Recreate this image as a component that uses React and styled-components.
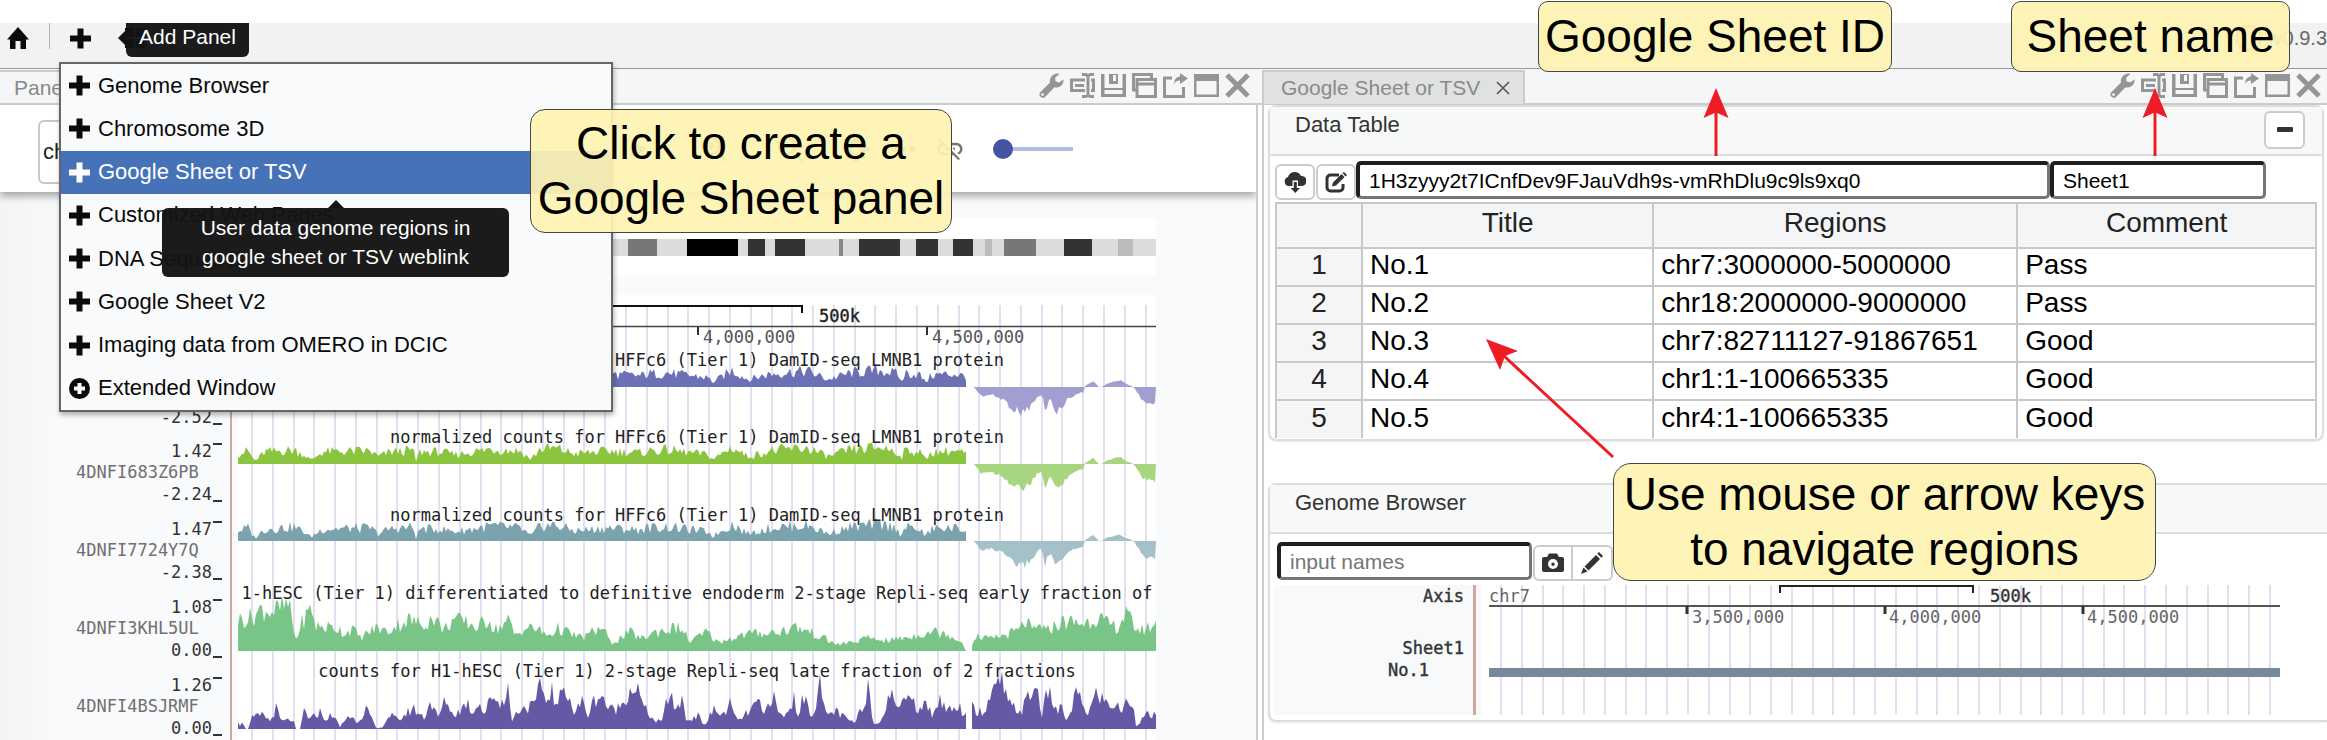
import React from "react";
import styled, { createGlobalStyle, css } from "styled-components";

const sans = '"Liberation Sans", Arial, Helvetica, sans-serif';
const mono = '"DejaVu Sans Mono", "Liberation Mono", monospace';

const GlobalStyle = createGlobalStyle`
  * { box-sizing: border-box; }
  body { margin: 0; background: #fff; font-family: ${sans}; color: #0a0a0a; overflow-x: hidden; }
  button, input { font-family: inherit; margin: 0; }
`;

/* ---------- page frame ---------- */

const Page = styled.div`
  position: relative;
  overflow: hidden;
  padding-top: 23px;
`;

const Toolbar = styled.header`
  position: relative;
  z-index: 3;
  display: flex;
  align-items: flex-start;
  height: 46px;
  padding-left: 7px;
  background: #f2f2f2;
  border-bottom: 1px solid #999;
`;

const ToolButton = styled.button`
  display: flex;
  align-items: center;
  justify-content: center;
  width: 22px;
  height: 30px;
  padding: 0;
  border: 0;
  background: none;
  color: #0a0a0a;
`;

const ToolDivider = styled.span`
  width: 1px;
  height: 26px;
  margin: 0 19px 0 20px;
  background: #b5b5b5;
`;

const LayoutButton = styled(ToolButton)`
  margin-left: 33px;
`;

const Version = styled.span`
  display: flex;
  align-items: center;
  gap: 10px;
  margin-left: auto;
  height: 30px;
  font-size: 20px;
  color: #666;
`;

const tipBox = css`
  position: absolute;
  background: rgba(20, 20, 20, 0.97);
  color: #fff;
  font-size: 21px;
  text-align: center;
  border-radius: 6px;
  &::before {
    content: "";
    position: absolute;
    border: 8px solid transparent;
  }
`;

const SideTip = styled.div`
  ${tipBox}
  left: 126px;
  top: 0;
  width: 123px;
  height: 34px;
  line-height: 27px;
  border-radius: 0 0 6px 6px;
  &::before {
    left: -16px;
    top: 7px;
    border-right-color: #141414;
  }
`;

const MenuTip = styled.div`
  ${tipBox}
  left: 101px;
  top: 144px;
  width: 347px;
  padding: 5px 30px 6px;
  line-height: 29px;
  &::before {
    left: 166px;
    top: -16px;
    border-bottom-color: #141414;
  }
`;

const Menu = styled.nav`
  position: absolute;
  left: 59px;
  top: 39px;
  display: flex;
  flex-direction: column;
  width: 554px;
  height: 350px;
  border: 2px solid #666;
  background: #f9fafc;
  box-shadow: 1px 3px 5px rgba(0, 0, 0, 0.3);
`;

const MenuItem = styled.button`
  flex: 1;
  display: flex;
  align-items: center;
  gap: 8px;
  padding: 0 8px;
  border: 0;
  font-size: 22px;
  text-align: left;
  background: ${(p) => (p.$active ? "#4673b8" : "none")};
  color: ${(p) => (p.$active ? "#fff" : "#0a0a0a")};
`;

const Workspace = styled.main`
  display: grid;
  grid-template-columns: minmax(0, 1262fr) minmax(0, 1065fr);
`;

const Panel = styled.section`
  display: flex;
  flex-direction: column;
  min-width: 0;
  overflow: hidden;
`;

const TabBar = styled.div`
  display: flex;
  align-items: center;
  justify-content: space-between;
  height: 36px;
  padding: 2px ${(p) => p.$end}px 0 0;
  background: #f5f6f8;
  border-bottom: 2px solid #ccc;
`;

const Tab = styled.div`
  display: flex;
  align-items: center;
  gap: 16px;
  height: 34px;
  padding: 0 14px;
  font-size: 21px;
  color: #8a8a8a;
  border-top: 2px solid #ccc;
  ${(p) =>
    p.$filled &&
    css`
      padding: 0 13px 0 17px;
      background: #e0e1e1;
      border-left: 2px solid #ccc;
      border-right: 2px solid #ccc;
    `}
`;

const TabClose = styled.button`
  display: flex;
  padding: 0;
  border: 0;
  background: none;
  color: #555;
`;

const PanelTools = styled.div`
  display: flex;
  gap: 6px;
  padding-bottom: 4px;
`;

const PanelTool = styled.button`
  display: flex;
  width: 25px;
  height: 25px;
  padding: 0;
  border: 0;
  background: none;
  color: #959595;
`;

/* ---------- browser panel ---------- */

const BrowserBody = styled.div`
  flex: 1;
  margin-right: 4px;
  border-right: 2px solid #ccc;
  background: linear-gradient(90deg, #f2f4f6, #f9fafc 60px);
  overflow: hidden;
`;

const ControlBar = styled.div`
  position: relative;
  z-index: 1;
  display: flex;
  align-items: center;
  height: 87px;
  padding-left: 38px;
  background: #fff;
  box-shadow: 0 4px 8px rgba(0, 0, 0, 0.35);
`;

const RegionInput = styled.input`
  width: 560px;
  height: 64px;
  margin-top: 6px;
  padding: 0 3px;
  border: 2px solid #c8c8c8;
  border-radius: 6px;
  font-size: 22px;
  color: #222;
`;

const ControlGroup = styled.div`
  display: flex;
  gap: ${(p) => p.$gap}px;
  margin-left: ${(p) => p.$start}px;
`;

const ControlButton = styled.button`
  display: flex;
  align-items: center;
  justify-content: center;
  width: 30px;
  height: 30px;
  padding: 0;
  border: 0;
  background: none;
  color: #757575;
`;

const ControlDivider = styled.span`
  width: 1px;
  height: 60px;
  margin-left: 20px;
  background: #ccc;
`;

const Slider = styled.input`
  appearance: none;
  width: 80px;
  height: 20px;
  margin-left: 28px;
  background: linear-gradient(#b4bae0, #b4bae0) center / 100% 4px no-repeat;
  &::-webkit-slider-thumb {
    appearance: none;
    width: 20px;
    height: 20px;
    border-radius: 50%;
    background: #4555a5;
  }
`;

const Chart = styled.svg`
  display: block;
  font-family: ${mono};
  font-size: 17px;
`;

/* ---------- sheet panel ---------- */

const SheetPanel = styled(Panel)`
  background: #fff;
`;

const SheetBody = styled.div`
  flex: 1;
  display: flex;
  flex-direction: column;
  gap: 42px;
  padding: 0 0 0 4px;
  border-left: 2px solid #ccc;
`;

const Card = styled.section`
  border: 2px solid #ddd;
  border-radius: 8px;
  box-shadow: 0 1px 2px rgba(0, 0, 0, 0.08);
  ${(p) => (p.$bleed ? "border-right: 0; border-radius: 8px 0 0 8px;" : "margin-right: 3px;")}
`;

const CardHeader = styled.header`
  display: flex;
  justify-content: space-between;
  height: 49px;
  padding: 4px 17px 0 25px;
  background: #f7f9f9;
  border-bottom: 2px solid #ddd;
`;

const CardTitle = styled.h2`
  margin: 0;
  font-size: 22px;
  font-weight: 400;
  line-height: 27px;
  color: #333;
`;

const CollapseButton = styled.button`
  display: flex;
  align-items: center;
  justify-content: center;
  width: 41px;
  height: 38px;
  padding: 0;
  border: 2px solid #ccc;
  border-radius: 6px;
  background: #fff;
  color: #333;
`;

const FieldRow = styled.div`
  display: flex;
  align-items: flex-start;
  padding: ${(p) => p.$pad};
`;

const SquareButton = styled.button`
  display: flex;
  align-items: center;
  justify-content: center;
  width: 40px;
  height: 36px;
  margin: 3px 0 0 ${(p) => (p.$joined ? 0 : 1)}px;
  padding: 0;
  border: 2px solid #ccc;
  border-left-width: ${(p) => (p.$joined ? 0 : 2)}px;
  border-radius: ${(p) => p.$radius || "6px"};
  background: #fff;
  color: #333;
`;

const Field = styled.input`
  ${(p) => (p.$width ? `width: ${p.$width}px;` : "flex: 1; min-width: 0;")}
  height: 38px;
  padding: 0 9px;
  border: 4px solid;
  border-color: #1f1f1f #767676 #767676 #1f1f1f;
  border-width: 4px 3px 3px 4px;
  border-radius: 5px;
  background: #fff;
  font-size: 21px;
  color: #000;
  &::placeholder { color: #757575; opacity: 1; }
`;

const TableWrap = styled.div`
  height: 239px;
  padding: 2px 5px 0 5px;
  overflow: hidden;
`;

const Table = styled.table`
  width: 100%;
  table-layout: fixed;
  border-collapse: collapse;
  font-size: 28px;
  line-height: 32px;
  th, td {
    height: 38px;
    padding: 0 7px 4px;
    border: 2px solid #c8c8c8;
    text-align: left;
    font-weight: 400;
    color: #000;
  }
  th {
    padding-bottom: 4px;
    background: #f4f5f7;
    text-align: center;
    color: #222;
  }
  thead th { height: 45px; padding-bottom: 6px; }
  tbody tr:last-child > * { border-bottom: 0; }
`;

const IndexCol = styled.col`
  width: 86px;
`;

const Col = styled.col`
  width: ${(p) => (p.$share ? `${p.$share}%` : "auto")};
`;

const TrackWrap = styled.div`
  padding: 4px 0 5px 4px;
  overflow: hidden;
`;

/* ---------- notes on top ---------- */

const Callout = styled.div`
  position: absolute;
  z-index: 5;
  left: ${(p) => p.$x}px;
  top: ${(p) => p.$y}px;
  width: ${(p) => p.$w}px;
  padding: ${(p) => p.$pad}px 0;
  border: 1px solid #444;
  border-radius: ${(p) => p.$r}px;
  background: rgba(255, 243, 178, 0.92);
  font-size: 46px;
  line-height: 55px;
  text-align: center;
  white-space: nowrap;
  color: #000;
`;

const Arrow = styled.svg`
  position: absolute;
  z-index: 6;
  left: ${(p) => p.$x}px;
  top: ${(p) => p.$y}px;
  color: #ee1c25;
`;

/* ---------- icons ---------- */

const Icon = ({ size = 25, h, box, children }) => (
  <svg width={size} height={h || size} viewBox={box || `0 0 ${size} ${h || size}`} fill="currentColor" aria-hidden="true">
    {children}
  </svg>
);

const Plus = () => (
  <Icon size={21}>
    <path d="M7.500 .5h6v7H21v6h-7.500v7h-6v-7H0v-6h7.500z" />
  </Icon>
);
const PlusCircle = () => (
  <Icon size={21}>
    <path fillRule="evenodd" d="M10.500 0a10.500 10.500 0 1 0 0 21 10.500 10.500 0 0 0 0-21zM8.500 5h4v3.500H16v4h-3.500V16h-4v-3.500H5v-4h3.500z" />
  </Icon>
);
const Home = () => (
  <Icon size={22}>
    <path d="M11 0l11 12.500h-3V22h-5.500v-8h-5v8H3v-9.500H0z" />
  </Icon>
);
const Tiles = () => (
  <Icon size={20}>
    <path d="M0 0h9v9H0zM11 0h9v9h-9zM0 11h9v9H0zM11 11h9v9h-9z" />
  </Icon>
);
const Minus = () => (
  <Icon size={16}>
    <rect y="5" width="16" height="5" rx="1" />
  </Icon>
);
const SmallX = () => (
  <Icon size={14}>
    <path d="M1 1l12 12M13 1L1 13" stroke="currentColor" strokeWidth="1.6" />
  </Icon>
);
const CloudDown = () => (
  <Icon size={22} h={21}>
    <path fillRule="evenodd" d="M5 14a4.600 4.600 0 0 1-1-9 7 7 0 0 1 13-1 5 5 0 0 1 1 10h-4V8.500H8.500V14zM9.800 10h3v6h3.200l-4.700 5-4.700-5h3.200z" />
  </Icon>
);
const Compose = () => (
  <Icon size={22} h={21}>
    <path d="M14 3H5.500A3.500 3.500 0 0 0 2 6.500v9A3.500 3.500 0 0 0 5.500 19h9a3.500 3.500 0 0 0 3.500-3.500V12" fill="none" stroke="currentColor" strokeWidth="3" />
    <path d="M8 10.500L16.500 2l3 3L11 13.500l-4 1zM17.500 1L19 0l3 3-1.500 1.500z" />
  </Icon>
);
const Camera = () => (
  <Icon size={22} h={20}>
    <path fillRule="evenodd" d="M2 4h3l2-3.500h8L17 4h3a2 2 0 0 1 2 2v11a2 2 0 0 1-2 2H2a2 2 0 0 1-2-2V6a2 2 0 0 1 2-2zM11 6a5 5 0 1 0 0 10 5 5 0 0 0 0-10zm0 3.500a1.700 1.700 0 1 1 0 3.400 1.700 1.700 0 0 1 0-3.400z" />
  </Icon>
);
const Pencil = () => (
  <Icon size={22}>
    <path d="M15 3l4 4L7.500 18.500l-4-4zM16.300 1.800L18 0l4 4-1.700 1.800zM2.500 15.500l4 4L0 22z" />
  </Icon>
);

const panelIcons = [
  ["Settings", <path key="p" d="M24.500 6.500l-4.500 3-3.500-1.200-.4-3.500L20.500.8a7.500 7.500 0 0 0-9.500 8.700L1 19.500a3.500 3.500 0 0 0 4.800 4.800l9.700-10a7.300 7.300 0 0 0 9-7.800zM3.500 23a1.400 1.400 0 1 1 0-2.800 1.400 1.400 0 0 1 0 2.800z" />],
  ["Rename", <g key="p" fill="none" stroke="currentColor" strokeWidth="3"><path d="M15 7H1.500v10.500H15M21 7h2.500v10.500H21M5 12.500h9M12 1.500h4l2 1.500 2-1.500h4M12 23.500h4l2-1.500 2 1.500h4M18 3v19" /></g>],
  ["Save", <path key="p" fillRule="evenodd" d="M0 1h3.500v14h18V1H25v23H0zM8 1h9v10H8zm4 1v6h3V2zM3.500 17v4h18v-4z" />],
  ["Duplicate", <path key="p" d="M5 17H1.500V1.500h18V5M5 6.500h18.500v17H5zM5 11h18.500" fill="none" stroke="currentColor" strokeWidth="3" />],
  ["Pop out", <g key="p"><path d="M9 5H1.500v18.500h19V14" fill="none" stroke="currentColor" strokeWidth="3" /><path d="M17 0l8 5.500-8 5.500V7.500c-3 0-5 1-6 4 0-4.500 2-7.500 6-8z" /></g>],
  ["Maximize", <path key="p" fillRule="evenodd" d="M0 1h25v23H0zM2.500 8v13.500h20V8z" />],
  ["Close", <path key="p" d="M2 2l21 21M23 2L2 23" fill="none" stroke="currentColor" strokeWidth="5" />],
];

const PanelIcons = () => (
  <PanelTools>
    {panelIcons.map(([name, shape]) => (
      <PanelTool key={name} aria-label={name}>
        <Icon>{shape}</Icon>
      </PanelTool>
    ))}
  </PanelTools>
);

/* ---------- signal tracks ---------- */

const noise = (i, seed) => {
  const v = Math.sin(i * 12.9898 + seed * 78.233) * 43758.5453;
  return v - Math.floor(v);
};

const level = (points, x) => {
  for (let i = 1; i < points.length; i++) {
    const [x1, y1] = points[i];
    if (x <= x1) {
      const [x0, y0] = points[i - 1];
      return y0 + ((y1 - y0) * (x - x0)) / (x1 - x0 || 1);
    }
  }
  return points[points.length - 1][1];
};

const areaPath = (points, base, rough, seed) => {
  const start = points[0][0];
  const end = points[points.length - 1][0];
  let d = `M${start} ${base}`;
  let i = 0;
  for (let x = start; x <= end; x += 2, i++) {
    const h = level(points, x);
    const wobble = 1 - rough + rough * 1.7 * noise(i, seed);
    d += `L${x} ${(base - h * wobble).toFixed(1)}`;
  }
  return `${d}L${end} ${base}Z`;
};

const damUp = [
  [238, 11], [248, 14], [255, 3], [265, 13], [294, 15], [304, 10], [311, 4], [322, 13], [370, 14], [378, 8], [390, 13],
  [413, 15], [416, 3], [420, 13], [440, 13], [455, 10], [490, 16], [520, 14], [531, 5], [540, 16], [555, 17], [575, 11],
  [608, 14], [640, 12], [648, 14], [668, 15], [708, 10], [713, 5], [732, 18], [748, 8], [770, 14], [790, 16], [808, 17],
  [828, 8], [850, 15], [880, 18], [898, 14], [901, 4], [905, 15], [920, 13], [925, 5], [932, 13], [955, 14], [966, 11],
];
const damDown = [
  [973, 1], [981, -9], [991, -8], [1004, -13], [1012, -22], [1021, -26], [1030, -21], [1037, -11], [1042, -8],
  [1045, -23], [1050, -12], [1057, -27], [1063, -19], [1070, -10], [1084, -5], [1085, 0],
];
const damTail = [
  [1085, 1], [1093, 6], [1098, 1], [1100, -1], [1106, 3], [1112, 5], [1120, 7], [1126, 3], [1132, 1], [1135, -2],
  [1140, -10], [1144, -16], [1156, -18],
];
const earlyLeft = [
  [238, 33], [252, 36], [262, 44], [274, 42], [288, 48], [292, 35], [295, 10], [302, 30], [312, 46], [315, 26],
  [329, 25], [339, 24], [344, 18], [352, 24], [360, 14], [377, 25], [387, 20], [396, 27], [409, 33], [421, 28],
  [434, 35], [444, 22], [452, 33], [467, 30], [478, 25], [490, 35], [494, 22], [509, 32], [515, 16], [524, 24],
  [536, 24], [547, 16], [559, 24], [570, 18], [582, 14], [602, 25], [611, 8], [621, 14], [629, 20], [642, 13],
  [655, 20], [680, 25], [690, 10], [707, 20], [718, 9], [726, 12], [747, 18], [777, 20], [796, 25], [810, 20],
  [823, 14], [836, 7], [852, 9], [869, 14], [886, 11], [911, 15], [930, 21], [949, 18], [962, 9], [966, 0],
];
const earlyRight = [
  [972, 8], [975, 17], [991, 12], [1020, 22], [1025, 32], [1033, 20], [1042, 28], [1046, 19], [1050, 24],
  [1063, 31], [1084, 29], [1098, 37], [1105, 29], [1118, 25], [1125, 39], [1139, 21], [1156, 28],
];
const lateLeft = [
  [238, 10], [240, 4], [242, 9], [245, 0], [249, 0], [251, 11], [264, 15], [270, 8], [276, 22], [281, 8], [293, 10],
  [296, 0], [300, 0], [304, 20], [310, 10], [320, 18], [328, 8], [331, 18], [340, 2], [348, 14], [358, 8], [366, 22],
  [375, 3], [377, 0], [382, 2], [390, 15], [398, 9], [413, 22], [424, 12], [430, 29], [438, 12], [446, 32], [452, 16],
  [459, 18], [467, 29], [473, 16], [478, 31], [484, 16], [494, 38], [500, 24], [508, 46], [511, 8], [520, 22],
  [534, 24], [542, 48], [546, 26], [551, 46], [556, 22], [566, 48], [574, 16], [582, 29], [588, 15], [595, 32],
  [602, 36], [609, 20], [620, 23], [627, 38], [636, 46], [644, 22], [655, 8], [663, 8], [667, 37], [678, 20],
  [683, 38], [686, 8], [697, 15], [705, 4], [714, 21], [722, 14], [730, 26], [737, 8], [747, 16], [758, 28],
  [764, 14], [772, 38], [779, 14], [789, 16], [794, 34], [798, 16], [804, 34], [812, 14], [820, 48], [825, 14],
  [836, 19], [844, 12], [855, 6], [861, 20], [869, 49], [873, 4], [882, 12], [890, 35], [903, 24], [911, 49],
  [916, 20], [928, 27], [932, 10], [939, 33], [947, 20], [958, 25], [966, 15],
];
const lateRight = [
  [972, 22], [983, 18], [993, 38], [1002, 50], [1008, 26], [1021, 18], [1029, 35], [1038, 43], [1042, 14], [1048, 41],
  [1057, 18], [1063, 22], [1067, 6], [1076, 38], [1088, 16], [1097, 39], [1105, 28], [1116, 24], [1122, 20],
  [1126, 27], [1132, 32], [1136, 4], [1147, 15], [1156, 14],
];

const damTitle = "normalized counts for HFFc6 (Tier 1) DamID-seq LMNB1 protein";

const tracks = [
  { top: 366, base: 387, title: damTitle, low: "-2.52", up: "#6c70b5", down: "#a09fd0" },
  { top: 443, base: 464, title: damTitle, high: "1.42", name: "4DNFI683Z6PB", low: "-2.24", up: "#8bc43f", down: "#a8d580" },
  { top: 521, base: 541, title: damTitle, high: "1.47", name: "4DNFI7724Y7Q", low: "-2.38", up: "#7aa3ad", down: "#a4c0c8" },
  {
    top: 599, base: 651, high: "1.08", name: "4DNFI3KHL5UL", low: "0.00", up: "#78c587",
    title: "1-hESC (Tier 1) differentiated to definitive endoderm 2-stage Repli-seq early fraction of",
    parts: [earlyLeft, earlyRight], rough: 0.35,
  },
  {
    top: 677, base: 729, high: "1.26", name: "4DNFI4BSJRMF", low: "0.00", up: "#6559a5",
    title: "counts for H1-hESC (Tier 1) 2-stage Repli-seq late fraction of 2 fractions",
    parts: [lateLeft, lateRight], rough: 0.35,
  },
];

const bands = [
  [300, 40, "#777"], [380, 30, "#333"], [450, 60, "#777"], [628, 29, "#777"], [687, 51, "#000"], [748, 17, "#333"],
  [775, 30, "#333"], [839, 4, "#888"], [859, 41, "#333"], [916, 22, "#333"], [953, 20, "#333"], [985, 7, "#bbb"],
  [1004, 32, "#777"], [1064, 28, "#333"], [1118, 15, "#bbb"],
];

const Grid = ({ x, count, y1, y2 }) => (
  <g stroke="#e1dff0" strokeWidth="2">
    {Array.from({ length: count }, (_, i) => {
      const gx = Math.round(x + i * 20.78);
      return <line key={i} x1={gx} x2={gx} y1={y1} y2={y2} />;
    })}
  </g>
);

const Track = ({ t, index }) => (
  <g>
    <g fill="#333" textAnchor="end">
      {t.high && <text x="212" y={t.top + 14}>{t.high}</text>}
      <text x="212" y={t.top + 57}>{t.low}</text>
    </g>
    {t.high && <rect x="213" y={t.top} width="9" height="2" fill="#333" />}
    <rect x="213" y={t.top + 57} width="9" height="2" fill="#333" />
    {t.name && <text x="76" y={t.top + 35} fill="#707070">{t.name}</text>}
    {t.parts ? (
      t.parts.map((p, i) => <path key={i} d={areaPath(p, t.base, t.rough, index + i)} fill={t.up} />)
    ) : (
      <>
        <path d={areaPath(damUp, t.base, 0.45, index)} fill={t.up} />
        <path d={areaPath(damDown, t.base, 0.2, index)} fill={t.down} />
        <path d={areaPath(damTail, t.base, 0.15, index)} fill={t.down} />
      </>
    )}
    <text x="697" y={t.top} textAnchor="middle" fill="#222">{t.title}</text>
  </g>
);

const LeftTracks = () => (
  <Chart width="1256" height="548" viewBox="0 192 1256 548">
    <rect x="238" y="218" width="918" height="57" fill="#fff" />
    <rect x="238" y="295" width="918" height="445" fill="#fff" />
    <rect x="238" y="239" width="918" height="17" fill="#dcdcde" />
    {bands.map(([x, w, fill]) => (
      <rect key={x} x={x} y="239" width={w} height="17" fill={fill} />
    ))}
    <Grid x={252} count={44} y1={305} y2={740} />
    <rect x="230" y="295" width="2" height="445" fill="#cfa9a0" />
    <path d="M610 306H802V313" fill="none" stroke="#111" strokeWidth="2" />
    <path d="M238 326.500H1156" stroke="#444" strokeWidth="1.500" />
    <path d="M698 327v8M927 327v8" stroke="#333" strokeWidth="2" />
    <g fill="#555">
      <text x="819" y="322" fill="#222" stroke="#222" strokeWidth=".4">500k</text>
      <text x="703" y="343">4,000,000</text>
      <text x="932" y="343">4,500,000</text>
    </g>
    {tracks.map((t, i) => (
      <Track key={i} t={t} index={i + 1} />
    ))}
  </Chart>
);

const RightTracks = () => (
  <Chart width="1053" height="130" viewBox="1274 584 1053 130">
    <rect x="1274" y="584" width="208" height="130" fill="#f8f9fb" />
    <Grid x={1501} count={38} y1={584} y2={714} />
    <rect x="1473" y="584" width="3" height="130" fill="#cfa9a0" />
    <path d="M1489 605H2280" stroke="#555" strokeWidth="2" />
    <path d="M1780 592V585H1973V592" fill="none" stroke="#222" strokeWidth="2" />
    <path d="M1687 605v8M1885 605v8M2083 605v8" stroke="#333" strokeWidth="3" />
    <rect x="1489" y="667" width="791" height="9" fill="#788a99" />
    <g fill="#333" stroke="#333" strokeWidth=".4">
      <text x="1464" y="601" textAnchor="end">Axis</text>
      <text x="1464" y="653" textAnchor="end">Sheet1</text>
      <text x="1388" y="675">No.1</text>
      <text x="1990" y="601">500k</text>
    </g>
    <g fill="#666">
      <text x="1489" y="601">chr7</text>
      <text x="1692" y="622">3,500,000</text>
      <text x="1889" y="622">4,000,000</text>
      <text x="2087" y="622">4,500,000</text>
    </g>
  </Chart>
);

/* ---------- data ---------- */

const menuItems = [
  "Genome Browser", "Chromosome 3D", "Google Sheet or TSV", "Customized Web Pages",
  "DNA Sequence", "Google Sheet V2", "Imaging data from OMERO in DCIC", "Extended Window",
];

const rows = [
  ["No.1", "chr7:3000000-5000000", "Pass"],
  ["No.2", "chr18:2000000-9000000", "Pass"],
  ["No.3", "chr7:82711127-91867651", "Good"],
  ["No.4", "chr1:1-100665335", "Good"],
  ["No.5", "chr4:1-100665335", "Good"],
];

const UpArrow = ({ x }) => (
  <Arrow $x={x} $y={88} width="26" height="68" viewBox="0 0 26 68">
    <path d="M13 0L25.500 30L14.500 25V68H11.500V25L.5 30Z" fill="currentColor" />
  </Arrow>
);

export default function App() {
  return (
    <Page>
      <GlobalStyle />
      <Toolbar>
        <ToolButton aria-label="Home"><Home /></ToolButton>
        <ToolDivider />
        <ToolButton aria-label="Add Panel"><Plus /></ToolButton>
        <LayoutButton aria-label="Layout"><Tiles /></LayoutButton>
        <Version>
          <Icon size={28}>
            <circle cx="14" cy="14" r="12" fill="none" stroke="#f26a3d" strokeWidth="3" />
          </Icon>
          v0.9.3
        </Version>
        <SideTip role="tooltip">Add Panel</SideTip>
        <Menu>
          {menuItems.map((label, i) => (
            <MenuItem key={label} $active={i === 2}>
              {i === 7 ? <PlusCircle /> : <Plus />}
              {label}
            </MenuItem>
          ))}
          <MenuTip role="tooltip">User data genome regions in google sheet or TSV weblink</MenuTip>
        </Menu>
      </Toolbar>

      <Workspace>
        <Panel>
          <TabBar $end={12}>
            <Tab>Panel</Tab>
            <PanelIcons />
          </TabBar>
          <BrowserBody>
            <ControlBar>
              <RegionInput aria-label="Region" defaultValue="chr7:3000000-5000000" />
              <ControlGroup $start={25} $gap={46}>
                <ControlButton aria-label="Go"><Icon size={18}><path d="M2 0l15 9-15 9z" /></Icon></ControlButton>
                <ControlButton aria-label="Zoom in"><Icon size={26}><path d="M17 17l8 8M6 10h8M10 6v8M18 10a8 8 0 1 1-16 0 8 8 0 0 1 16 0z" fill="none" stroke="currentColor" strokeWidth="3" /></Icon></ControlButton>
                <ControlButton aria-label="Zoom out"><Icon size={26}><path d="M17 17l8 8M6 10h8M18 10a8 8 0 1 1-16 0 8 8 0 0 1 16 0z" fill="none" stroke="currentColor" strokeWidth="3" /></Icon></ControlButton>
              </ControlGroup>
              <ControlDivider />
              <ControlGroup $start={15} $gap={17}>
                <ControlButton aria-label="Options"><Icon size={26}><circle cx="13" cy="13" r="7" fill="none" stroke="currentColor" strokeWidth="5" /><path d="M13 0v5M13 21v5M0 13h5M21 13h5M4 4l4 4M18 18l4 4M22 4l-4 4M8 18l-4 4" stroke="currentColor" strokeWidth="5" /></Icon></ControlButton>
                <ControlButton aria-label="More"><Icon size={26}><circle cx="4" cy="13" r="3" /><circle cx="13" cy="13" r="3" /><circle cx="22" cy="13" r="3" /></Icon></ControlButton>
                <ControlButton aria-label="Unlink">
                  <Icon size={32} box="0 0 24 24">
                    <path d="M17 7h-4v1.900h4c1.710 0 3.100 1.390 3.100 3.100 0 1.430-.98 2.630-2.310 2.980l1.460 1.460C20.880 15.610 22 13.950 22 12c0-2.760-2.240-5-5-5zm-1 4h-2.190l2 2H16v-2zM2 4.270l3.110 3.110C3.290 8.120 2 9.910 2 12c0 2.760 2.240 5 5 5h4v-1.900H7c-1.710 0-3.100-1.390-3.100-3.100 0-1.590 1.210-2.900 2.760-3.070L8.730 11H8v2h2.730L13 15.270V17h1.730l4.010 4L20 19.740 3.270 3 2 4.270z" />
                  </Icon>
                </ControlButton>
              </ControlGroup>
              <Slider type="range" aria-label="Link distance" min="0" max="100" defaultValue="0" />
            </ControlBar>
            <LeftTracks />
          </BrowserBody>
        </Panel>

        <SheetPanel>
          <TabBar $end={6}>
            <Tab $filled>
              Google Sheet or TSV
              <TabClose aria-label="Close tab"><SmallX /></TabClose>
            </Tab>
            <PanelIcons />
          </TabBar>
          <SheetBody>
            <Card>
              <CardHeader>
                <CardTitle>Data Table</CardTitle>
                <CollapseButton aria-label="Collapse"><Minus /></CollapseButton>
              </CardHeader>
              <FieldRow $pad="5px 56px 0 4px">
                <SquareButton aria-label="Download"><CloudDown /></SquareButton>
                <SquareButton aria-label="Edit"><Compose /></SquareButton>
                <Field aria-label="Google Sheet ID" defaultValue="1H3zyyy2t7ICnfDev9FJauVdh9s-vmRhDlu9c9ls9xq0" />
                <Field aria-label="Sheet name" $width={216} defaultValue="Sheet1" />
              </FieldRow>
              <TableWrap>
                <Table>
                  <colgroup>
                    <IndexCol />
                    <Col $share={28} />
                    <Col $share={35} />
                    <Col />
                  </colgroup>
                  <thead>
                    <tr>
                      <th aria-label="Row" />
                      <th>Title</th>
                      <th>Regions</th>
                      <th>Comment</th>
                    </tr>
                  </thead>
                  <tbody>
                    {rows.map((r, i) => (
                      <tr key={r[0]}>
                        <th scope="row">{i + 1}</th>
                        {r.map((c) => <td key={c}>{c}</td>)}
                      </tr>
                    ))}
                  </tbody>
                </Table>
              </TableWrap>
            </Card>

            <Card $bleed>
              <CardHeader>
                <CardTitle>Genome Browser</CardTitle>
              </CardHeader>
              <FieldRow $pad="8px 56px 0 7px">
                <Field aria-label="Names" $width={255} placeholder="input names" />
                <SquareButton aria-label="Snapshot" $radius="6px 0 0 6px"><Camera /></SquareButton>
                <SquareButton aria-label="Edit tracks" $joined $radius="0 6px 6px 0"><Pencil /></SquareButton>
              </FieldRow>
              <TrackWrap>
                <RightTracks />
              </TrackWrap>
            </Card>
          </SheetBody>
        </SheetPanel>
      </Workspace>

      <Callout $x={530} $y={109} $w={422} $pad={6} $r={15}>Click to create a<br />Google Sheet panel</Callout>
      <Callout $x={1538} $y={1} $w={354} $pad={7} $r={10}>Google Sheet ID</Callout>
      <Callout $x={2011} $y={1} $w={279} $pad={7} $r={10}>Sheet name</Callout>
      <Callout $x={1613} $y={463} $w={543} $pad={3} $r={18}>Use mouse or arrow keys<br />to navigate regions</Callout>
      <UpArrow x={1703} />
      <UpArrow x={2142} />
      <Arrow $x={1486} $y={339} width="130" height="120" viewBox="0 0 130 120">
        <path d="M18 17L127 118" stroke="currentColor" strokeWidth="3" />
        <path d="M0 0L32 12L19 17L14 31Z" fill="currentColor" />
      </Arrow>
    </Page>
  );
}
